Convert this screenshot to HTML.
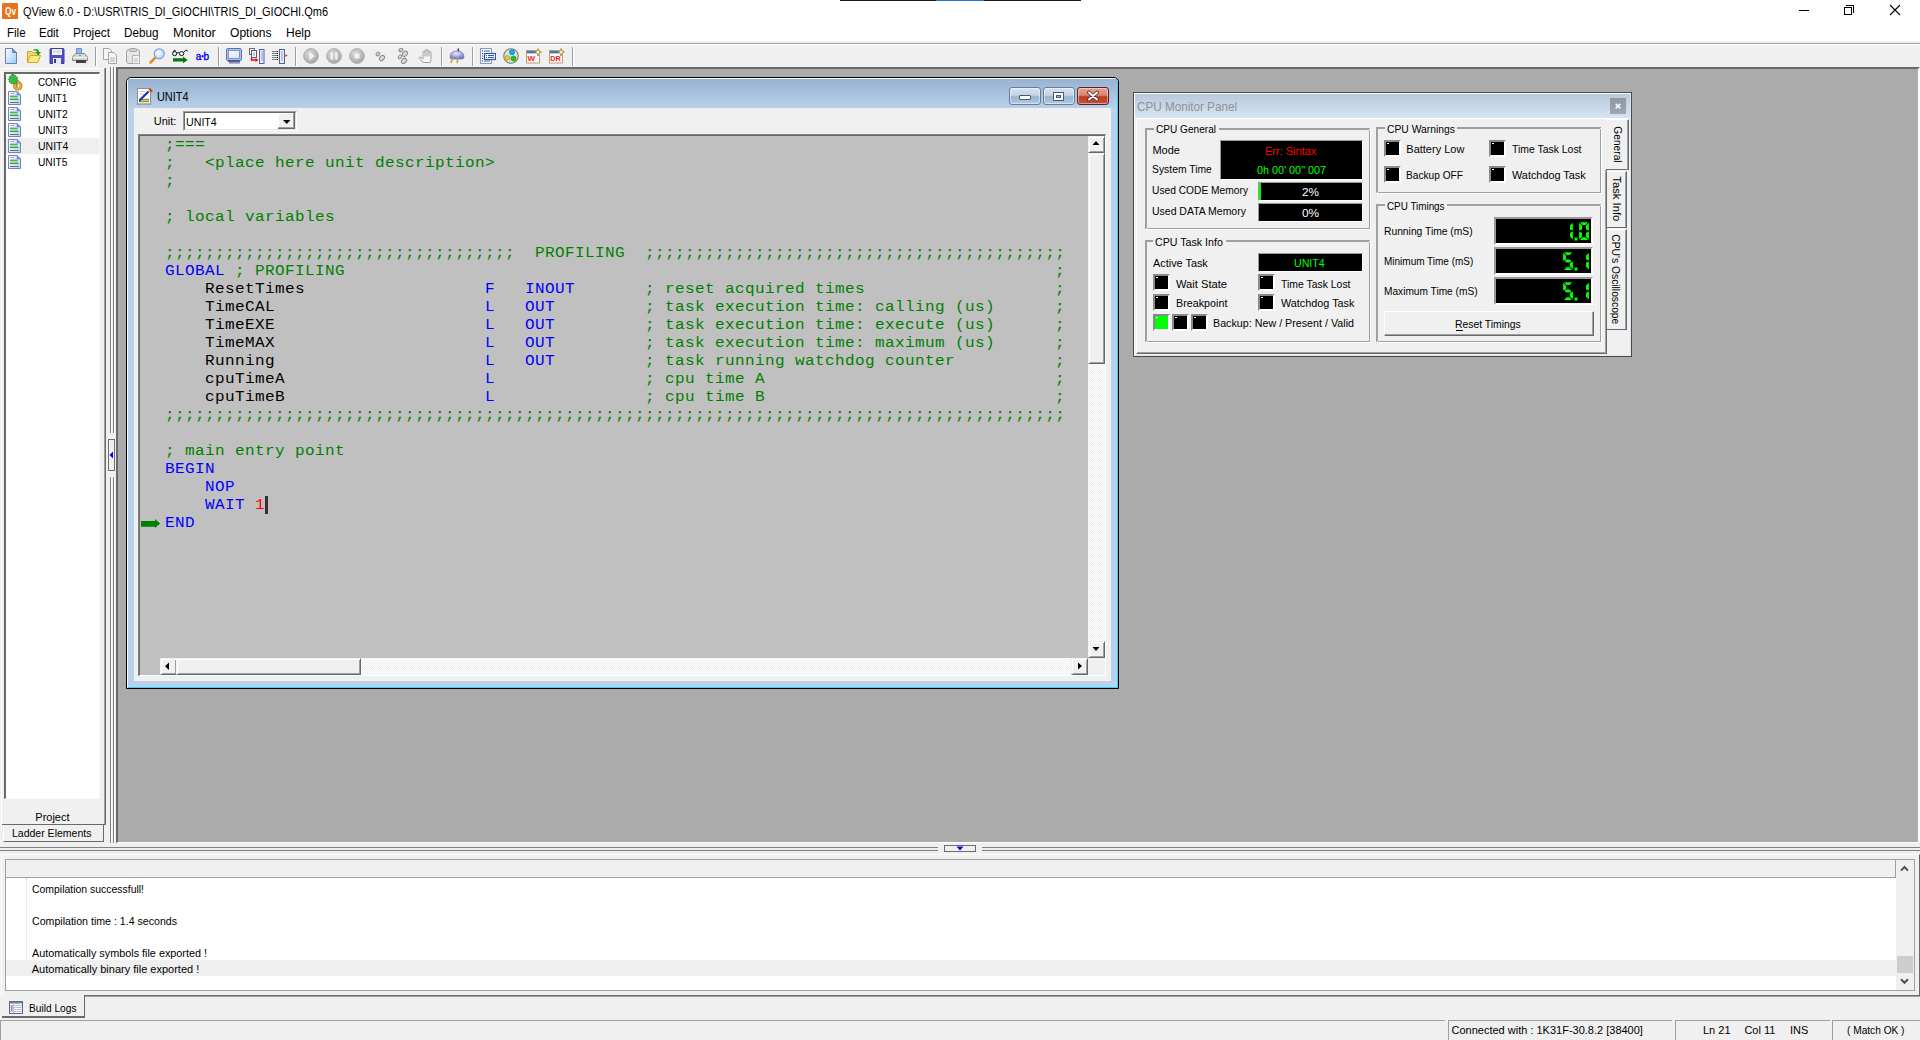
<!DOCTYPE html>
<html><head><meta charset="utf-8"><style>
html,body{margin:0;padding:0;}
body{width:1920px;height:1040px;position:relative;overflow:hidden;background:#f0f0f0;font-family:"Liberation Sans",sans-serif;}
body div{position:absolute;box-sizing:border-box;}
.t{white-space:pre;}
svg{position:absolute;}
</style></head><body>
<div style="left:0px;top:0px;width:1920px;height:41px;background:#fff"></div>
<div style="left:840px;top:0px;width:241px;height:1px;background:#1a1a1a"></div>
<div style="left:936px;top:0px;width:48px;height:1px;background:#2a72e0"></div>
<div style="left:0px;top:41px;width:1920px;height:2px;background:#f0f0f0"></div>
<div style="left:0px;top:43px;width:1920px;height:1px;background:#a0a0a0"></div>
<div style="left:0px;top:44px;width:1920px;height:1px;background:#fff"></div>
<div style="left:2px;top:3px;width:16px;height:16px;background:#e8731c;border-radius:1px"></div>
<div class="t" style="left:4.50px;top:6.54px;font:bold 10px 'Liberation Sans', sans-serif;line-height:10px;color:#fff;transform:scaleX(0.8246);transform-origin:0 0;">Qv</div>
<div class="t" style="left:23.00px;top:5.84px;font:normal 12px 'Liberation Sans', sans-serif;line-height:12px;color:#000;transform:scaleX(0.9154);transform-origin:0 0;">QView 6.0 - D:\USR\TRIS_DI_GIOCHI\TRIS_DI_GIOCHI.Qm6</div>
<div style="left:1799px;top:10px;width:10px;height:1px;background:#000"></div>
<div style="left:1844px;top:7px;width:8px;height:8px;border:1px solid #000"></div>
<div style="left:1846px;top:5px;width:8px;height:8px;border-top:1px solid #000;border-right:1px solid #000"></div>
<svg style="left:1889px;top:4px" width="12" height="12"><path d="M1 1L11 11M11 1L1 11" stroke="#000" stroke-width="1.1"/></svg>
<div class="t" style="left:7.10px;top:27.14px;font:normal 12px 'Liberation Sans', sans-serif;line-height:12px;color:#000;transform:scaleX(0.9619);transform-origin:0 0;">File</div>
<div class="t" style="left:39.00px;top:27.14px;font:normal 12px 'Liberation Sans', sans-serif;line-height:12px;color:#000;transform:scaleX(0.9576);transform-origin:0 0;">Edit</div>
<div class="t" style="left:73.00px;top:27.14px;font:normal 12px 'Liberation Sans', sans-serif;line-height:12px;color:#000;transform:scaleX(0.9907);transform-origin:0 0;">Project</div>
<div class="t" style="left:124.30px;top:27.14px;font:normal 12px 'Liberation Sans', sans-serif;line-height:12px;color:#000;transform:scaleX(0.9756);transform-origin:0 0;">Debug</div>
<div class="t" style="left:173.20px;top:27.14px;font:normal 12px 'Liberation Sans', sans-serif;line-height:12px;color:#000;transform:scaleX(1.0696);transform-origin:0 0;">Monitor</div>
<div class="t" style="left:230.20px;top:27.14px;font:normal 12px 'Liberation Sans', sans-serif;line-height:12px;color:#000;transform:scaleX(1.0059);transform-origin:0 0;">Options</div>
<div class="t" style="left:286.00px;top:27.14px;font:normal 12px 'Liberation Sans', sans-serif;line-height:12px;color:#000;">Help</div>
<div style="left:0px;top:67px;width:106px;height:776px;background:#f0f0f0"></div>
<div style="left:1px;top:68px;width:104px;height:1px;background:#fff"></div>
<div style="left:1px;top:68px;width:1px;height:757px;background:#fff"></div>
<div style="left:104px;top:68px;width:1px;height:757px;background:#a0a0a0"></div>
<div style="left:105px;top:68px;width:1px;height:757px;background:#696969"></div>
<div style="left:4px;top:72px;width:96px;height:727px;background:#fff;border-top:2px solid #696969;border-left:2px solid #696969;border-right:1px solid #f8f8f8;border-bottom:1px solid #f8f8f8"></div>
<div style="left:6px;top:138px;width:93px;height:16px;background:#efefef"></div>
<div class="t" style="left:38.00px;top:76.69px;font:normal 11px 'Liberation Sans', sans-serif;line-height:11px;color:#000;transform:scaleX(0.8954);transform-origin:0 0;">CONFIG</div>
<div class="t" style="left:38.00px;top:92.69px;font:normal 11px 'Liberation Sans', sans-serif;line-height:11px;color:#000;transform:scaleX(0.9219);transform-origin:0 0;">UNIT1</div>
<div class="t" style="left:38.00px;top:108.69px;font:normal 11px 'Liberation Sans', sans-serif;line-height:11px;color:#000;transform:scaleX(0.9377);transform-origin:0 0;">UNIT2</div>
<div class="t" style="left:38.00px;top:124.69px;font:normal 11px 'Liberation Sans', sans-serif;line-height:11px;color:#000;transform:scaleX(0.9282);transform-origin:0 0;">UNIT3</div>
<div class="t" style="left:38.00px;top:140.69px;font:normal 11px 'Liberation Sans', sans-serif;line-height:11px;color:#000;transform:scaleX(0.9534);transform-origin:0 0;">UNIT4</div>
<div class="t" style="left:38.00px;top:156.69px;font:normal 11px 'Liberation Sans', sans-serif;line-height:11px;color:#000;transform:scaleX(0.9282);transform-origin:0 0;">UNIT5</div>
<div style="left:2px;top:824px;width:103px;height:1px;background:#696969"></div>
<div class="t" style="left:35.30px;top:811.99px;font:normal 11px 'Liberation Sans', sans-serif;line-height:11px;color:#000;">Project</div>
<div style="left:3px;top:825px;width:101px;height:17px;background:#f0f0f0;border-right:1px solid #696969;border-bottom:1px solid #696969;border-left:1px solid #fff"></div>
<div class="t" style="left:12.30px;top:827.69px;font:normal 11px 'Liberation Sans', sans-serif;line-height:11px;color:#000;transform:scaleX(0.9548);transform-origin:0 0;">Ladder Elements</div>
<div style="left:110px;top:67px;width:1px;height:366px;background:#808080"></div>
<div style="left:113px;top:67px;width:1px;height:366px;background:#808080"></div>
<div style="left:111px;top:67px;width:1px;height:366px;background:#fff"></div>
<div style="left:114px;top:67px;width:1px;height:366px;background:#fff"></div>
<div style="left:110px;top:477px;width:1px;height:366px;background:#808080"></div>
<div style="left:113px;top:477px;width:1px;height:366px;background:#808080"></div>
<div style="left:111px;top:477px;width:1px;height:366px;background:#fff"></div>
<div style="left:114px;top:477px;width:1px;height:366px;background:#fff"></div>
<div style="left:108px;top:439px;width:7px;height:32px;background:#f0f0f0;border:1px solid #6d6d6d"></div>
<svg style="left:109px;top:451px" width="5" height="8"><path d="M4 0.5V7.5L0.5 4Z" fill="#0000ff"/></svg>
<div style="left:116px;top:67px;width:1804px;height:776px;background:#ababab;border-top:2px solid #696969;border-left:2px solid #696969;border-right:2px solid #fff;border-bottom:1px solid #fff"></div>
<div style="left:0px;top:843px;width:1920px;height:11px;background:#f0f0f0"></div>
<div style="left:0px;top:847px;width:938px;height:1px;background:#808080"></div>
<div style="left:0px;top:850px;width:938px;height:1px;background:#808080"></div>
<div style="left:982px;top:847px;width:938px;height:1px;background:#808080"></div>
<div style="left:982px;top:850px;width:938px;height:1px;background:#808080"></div>
<div style="left:944px;top:845px;width:32px;height:7px;background:#f0f0f0;border:1px solid #6d6d6d"></div>
<svg style="left:956px;top:846px" width="8" height="5"><path d="M0.5 0.5H7.5L4 4.5Z" fill="#0000ff"/></svg>
<div style="left:1px;top:854px;width:1919px;height:142px;background:#f0f0f0;border-top:1px solid #fff;border-left:1px solid #fff;border-right:1px solid #696969"></div>
<div style="left:5px;top:859px;width:1910px;height:132px;background:#fff;border:1px solid #a0a0a0"></div>
<div style="left:6px;top:860px;width:1890px;height:18px;background:#f0f0f0;border-bottom:1px solid #a0a0a0;border-right:1px solid #a0a0a0"></div>
<div style="left:1896px;top:860px;width:18px;height:130px;background:#f0f0f0"></div>
<div style="left:1897px;top:956px;width:16px;height:17px;background:#cdcdcd"></div>
<svg style="left:1900px;top:865px" width="9" height="7"><path d="M1 5.6L4.5 2L8 5.6" stroke="#505050" stroke-width="2" fill="none"/></svg>
<svg style="left:1900px;top:978px" width="9" height="7"><path d="M1 1.2L4.5 4.8L8 1.2" stroke="#505050" stroke-width="2" fill="none"/></svg>
<div style="left:6px;top:960px;width:1890px;height:16px;background:#efefef"></div>
<div style="left:26px;top:878px;width:1px;height:82px;border-left:1px dotted #dcdcdc"></div>
<div class="t" style="left:31.75px;top:883.69px;font:normal 11px 'Liberation Sans', sans-serif;line-height:11px;color:#000;transform:scaleX(0.9492);transform-origin:0 0;">Compilation successfull!</div>
<div class="t" style="left:31.75px;top:915.69px;font:normal 11px 'Liberation Sans', sans-serif;line-height:11px;color:#000;transform:scaleX(0.9641);transform-origin:0 0;">Compilation time : 1.4 seconds</div>
<div class="t" style="left:31.75px;top:947.69px;font:normal 11px 'Liberation Sans', sans-serif;line-height:11px;color:#000;transform:scaleX(0.9837);transform-origin:0 0;">Automatically symbols file exported !</div>
<div class="t" style="left:31.75px;top:963.69px;font:normal 11px 'Liberation Sans', sans-serif;line-height:11px;color:#000;">Automatically binary file exported !</div>
<div style="left:84px;top:995px;width:1836px;height:1px;background:#6d6d6d"></div>
<div style="left:85px;top:996px;width:1835px;height:1px;background:#a0a0a0"></div>
<div style="left:2px;top:996px;width:83px;height:22px;background:#f0f0f0;border-right:1px solid #696969;border-bottom:2px solid #696969"></div>
<div class="t" style="left:29.00px;top:1003.19px;font:normal 11px 'Liberation Sans', sans-serif;line-height:11px;color:#000;transform:scaleX(0.9247);transform-origin:0 0;">Build Logs</div>
<div style="left:0px;top:1019px;width:1920px;height:21px;background:#f0f0f0"></div>
<div style="left:0px;top:1020px;width:1445px;height:20px;border-top:1px solid #a0a0a0;border-left:1px solid #a0a0a0"></div>
<div style="left:1448px;top:1020px;width:224px;height:20px;border-top:1px solid #a0a0a0;border-left:1px solid #a0a0a0"></div>
<div style="left:1675px;top:1020px;width:155px;height:20px;border-top:1px solid #a0a0a0;border-left:1px solid #a0a0a0"></div>
<div style="left:1832px;top:1020px;width:88px;height:20px;border-top:1px solid #a0a0a0;border-left:1px solid #a0a0a0"></div>
<div class="t" style="left:1451.50px;top:1024.69px;font:normal 11px 'Liberation Sans', sans-serif;line-height:11px;color:#000;">Connected with : 1K31F-30.8.2 [38400]</div>
<div class="t" style="left:1703.00px;top:1024.69px;font:normal 11px 'Liberation Sans', sans-serif;line-height:11px;color:#000;">Ln 21</div>
<div class="t" style="left:1744.40px;top:1024.69px;font:normal 11px 'Liberation Sans', sans-serif;line-height:11px;color:#000;">Col 11</div>
<div class="t" style="left:1790.00px;top:1024.69px;font:normal 11px 'Liberation Sans', sans-serif;line-height:11px;color:#000;">INS</div>
<div class="t" style="left:1846.50px;top:1024.69px;font:normal 11px 'Liberation Sans', sans-serif;line-height:11px;color:#000;transform:scaleX(0.9223);transform-origin:0 0;">( Match OK )</div>
<div style="left:126px;top:77px;width:993px;height:612px;border:1px solid #000;border-radius:5px 5px 0 0;background:#b9d1ea;overflow:hidden"><div style="left:0;top:0;width:991px;height:610px;border-top:1px solid #fff;border-left:1px solid #fff;border-right:1px solid #36d0ff;border-bottom:1px solid #36d0ff;border-radius:4px 4px 0 0"></div><div style="left:1px;top:1px;width:989px;height:30px;background:linear-gradient(#98b3d1,#b9d1ea)"></div></div>
<div style="left:134px;top:108px;width:977px;height:573px;background:#f0f0f0"></div>
<svg style="left:137px;top:87px" width="17" height="18" viewBox="0 0 17 18"><rect x="0.5" y="1.5" width="13" height="16" fill="#fff" stroke="#8c8c8c"/><rect x="1" y="16" width="12" height="1.5" fill="#b8b8b8"/><path d="M2.5 4.5H8M2.5 7H7" stroke="#c4c4c4"/><path d="M2.5 12.5H12M2.5 14.5H12" stroke="#9a9420" stroke-width="1.3"/><path d="M3 13L12.5 3.5" stroke="#1428d8" stroke-width="2.2"/><path d="M11.5 4.5L13.5 2.5" stroke="#f0e020" stroke-width="2.4"/><path d="M13 1.2L15.8 4L14.6 5.2L11.8 2.4Z" fill="#ff1818"/><path d="M2.2 14.5L3.5 12.5" stroke="#000" stroke-width="1.2"/></svg>
<div class="t" style="left:156.50px;top:90.64px;font:normal 12px 'Liberation Sans', sans-serif;line-height:12px;color:#000;transform:scaleX(0.9086);transform-origin:0 0;">UNIT4</div>
<div style="left:1009px;top:87px;width:32px;height:18px;border:1px solid #6b7d96;border-radius:3px;background:linear-gradient(#d6e3f2 0%,#c3d4e8 45%,#9ab4d0 55%,#b5cae2 100%);box-shadow:inset 0 0 0 1px rgba(255,255,255,.45)"></div>
<div style="left:1043px;top:87px;width:32px;height:18px;border:1px solid #6b7d96;border-radius:3px;background:linear-gradient(#d6e3f2 0%,#c3d4e8 45%,#9ab4d0 55%,#b5cae2 100%);box-shadow:inset 0 0 0 1px rgba(255,255,255,.45)"></div>
<div style="left:1077px;top:87px;width:32px;height:18px;border:1px solid #5b2222;border-radius:3px;background:linear-gradient(#e8a090 0%,#d88670 45%,#b83c22 55%,#c75038 100%);box-shadow:inset 0 0 0 1px rgba(255,255,255,.45)"></div>
<div style="left:1019px;top:95px;width:12px;height:5px;background:#fff;border:1px solid #4b5a70;border-radius:1px"></div>
<div style="left:1054px;top:93px;width:9px;height:7px;background:transparent;border:2px solid #fff;outline:1px solid #4b5a70;box-shadow:inset 0 0 0 1px #4b5a70"></div>
<svg style="left:1086px;top:90px" width="14" height="12" viewBox="0 0 14 12"><path d="M3 2.5L11 9.5M11 2.5L3 9.5" stroke="#4a2a2a" stroke-width="3.6" stroke-linecap="round"/><path d="M3 2.5L11 9.5M11 2.5L3 9.5" stroke="#fff" stroke-width="2" stroke-linecap="round"/></svg>
<div class="t" style="left:153.80px;top:115.69px;font:normal 11px 'Liberation Sans', sans-serif;line-height:11px;color:#000;">Unit:</div>
<div style="left:183px;top:111px;width:114px;height:20px;background:#fff;border-top:1px solid #a0a0a0;border-left:1px solid #a0a0a0;border-right:1px solid #fff;border-bottom:1px solid #fff"></div>
<div style="left:184px;top:112px;width:112px;height:18px;border-top:1px solid #696969;border-left:1px solid #696969;border-right:1px solid #e3e3e3;border-bottom:1px solid #e3e3e3"></div>
<div style="left:278px;top:113px;width:17px;height:16px;background:#f0f0f0;border-right:1px solid #696969;border-bottom:1px solid #696969;box-shadow:inset -1px -1px 0 #a0a0a0, inset 1px 1px 0 #fff"></div>
<svg style="left:283px;top:120px" width="8" height="5"><path d="M0 0H7.5L3.75 4Z" fill="#000"/></svg>
<div class="t" style="left:186.40px;top:117.09px;font:normal 11px 'Liberation Sans', sans-serif;line-height:11px;color:#000;transform:scaleX(0.9691);transform-origin:0 0;">UNIT4</div>
<div style="left:138px;top:134px;width:968px;height:542px;background:#c0c0c0;border-top:2px solid #808080;border-left:2px solid #808080;border-right:1px solid #fff;border-bottom:1px solid #fff"></div>
<div style="left:139px;top:135px;width:966px;height:1px;background:#696969"></div>
<div style="left:139px;top:135px;width:1px;height:540px;background:#696969"></div>
<div style="left:1088px;top:136px;width:17px;height:522px;background-color:#fcfcfc;background-image:repeating-conic-gradient(#f0f0f0 0 25%, #ffffff 0 50%);background-size:2px 2px"></div>
<div style="left:1088px;top:136px;width:17px;height:17px;background:#f0f0f0;border-top:1px solid #f0f0f0;border-left:1px solid #f0f0f0;border-right:1px solid #696969;border-bottom:1px solid #696969;box-shadow:inset 1px 1px 0 #fff, inset -1px -1px 0 #a0a0a0"></div>
<svg style="left:1092px;top:140px" width="9" height="6"><path d="M0.5 5H7.5L4 1Z" fill="#000"/></svg>
<div style="left:1088px;top:153px;width:17px;height:211px;background:#f0f0f0;border-top:1px solid #f0f0f0;border-left:1px solid #f0f0f0;border-right:1px solid #696969;border-bottom:1px solid #696969;box-shadow:inset 1px 1px 0 #fff, inset -1px -1px 0 #a0a0a0"></div>
<div style="left:1088px;top:641px;width:17px;height:17px;background:#f0f0f0;border-top:1px solid #f0f0f0;border-left:1px solid #f0f0f0;border-right:1px solid #696969;border-bottom:1px solid #696969;box-shadow:inset 1px 1px 0 #fff, inset -1px -1px 0 #a0a0a0"></div>
<svg style="left:1092px;top:646px" width="9" height="6"><path d="M0.5 1H7.5L4 5Z" fill="#000"/></svg>
<div style="left:160px;top:658px;width:928px;height:17px;background-color:#fcfcfc;background-image:repeating-conic-gradient(#f0f0f0 0 25%, #ffffff 0 50%);background-size:2px 2px"></div>
<div style="left:160px;top:658px;width:17px;height:17px;background:#f0f0f0;border-top:1px solid #f0f0f0;border-left:1px solid #f0f0f0;border-right:1px solid #696969;border-bottom:1px solid #696969;box-shadow:inset 1px 1px 0 #fff, inset -1px -1px 0 #a0a0a0"></div>
<svg style="left:164px;top:662px" width="6" height="9"><path d="M5 0.5V8L1 4.25Z" fill="#000"/></svg>
<div style="left:176px;top:658px;width:185px;height:17px;background:#f0f0f0;border-top:1px solid #f0f0f0;border-left:1px solid #f0f0f0;border-right:1px solid #696969;border-bottom:1px solid #696969;box-shadow:inset 1px 1px 0 #fff, inset -1px -1px 0 #a0a0a0"></div>
<div style="left:1071px;top:658px;width:17px;height:17px;background:#f0f0f0;border-top:1px solid #f0f0f0;border-left:1px solid #f0f0f0;border-right:1px solid #696969;border-bottom:1px solid #696969;box-shadow:inset 1px 1px 0 #fff, inset -1px -1px 0 #a0a0a0"></div>
<svg style="left:1077px;top:662px" width="6" height="9"><path d="M1 0.5V7.5L5 4Z" fill="#000"/></svg>
<div style="left:1088px;top:658px;width:17px;height:17px;background:#f0f0f0"></div>
<div style="left:140px;top:136px;width:948px;height:522px;overflow:hidden">
<div class="t" style="left:25px;top:-0.26px;font:16px 'Liberation Mono', monospace;letter-spacing:0.4px;line-height:18px;color:#008000;transform-origin:0 13.26px;transform:scaleY(0.86)">;===</div>
<div class="t" style="left:25px;top:17.74px;font:16px 'Liberation Mono', monospace;letter-spacing:0.4px;line-height:18px;color:#008000;transform-origin:0 13.26px;transform:scaleY(0.86)">;   &lt;place here unit description&gt;</div>
<div class="t" style="left:25px;top:35.74px;font:16px 'Liberation Mono', monospace;letter-spacing:0.4px;line-height:18px;color:#008000;transform-origin:0 13.26px;transform:scaleY(0.86)">;</div>
<div class="t" style="left:25px;top:71.74px;font:16px 'Liberation Mono', monospace;letter-spacing:0.4px;line-height:18px;color:#008000;transform-origin:0 13.26px;transform:scaleY(0.86)">; local variables</div>
<div class="t" style="left:25px;top:107.74px;font:16px 'Liberation Mono', monospace;letter-spacing:0.4px;line-height:18px;color:#008000;transform-origin:0 13.26px;transform:scaleY(0.86)">;;;;;;;;;;;;;;;;;;;;;;;;;;;;;;;;;;;  PROFILING  ;;;;;;;;;;;;;;;;;;;;;;;;;;;;;;;;;;;;;;;;;;</div>
<div class="t" style="left:25px;top:125.74px;font:16px 'Liberation Mono', monospace;letter-spacing:0.4px;line-height:18px;color:#0000ff;transform-origin:0 13.26px;transform:scaleY(0.86)">GLOBAL</div>
<div class="t" style="left:95px;top:125.74px;font:16px 'Liberation Mono', monospace;letter-spacing:0.4px;line-height:18px;color:#008000;transform-origin:0 13.26px;transform:scaleY(0.86)">; PROFILING</div>
<div class="t" style="left:915px;top:125.74px;font:16px 'Liberation Mono', monospace;letter-spacing:0.4px;line-height:18px;color:#008000;transform-origin:0 13.26px;transform:scaleY(0.86)">;</div>
<div class="t" style="left:65px;top:143.74px;font:16px 'Liberation Mono', monospace;letter-spacing:0.4px;line-height:18px;color:#000000;transform-origin:0 13.26px;transform:scaleY(0.86)">ResetTimes</div>
<div class="t" style="left:345px;top:143.74px;font:16px 'Liberation Mono', monospace;letter-spacing:0.4px;line-height:18px;color:#0000ff;transform-origin:0 13.26px;transform:scaleY(0.86)">F</div>
<div class="t" style="left:385px;top:143.74px;font:16px 'Liberation Mono', monospace;letter-spacing:0.4px;line-height:18px;color:#0000ff;transform-origin:0 13.26px;transform:scaleY(0.86)">INOUT</div>
<div class="t" style="left:505px;top:143.74px;font:16px 'Liberation Mono', monospace;letter-spacing:0.4px;line-height:18px;color:#008000;transform-origin:0 13.26px;transform:scaleY(0.86)">; reset acquired times</div>
<div class="t" style="left:915px;top:143.74px;font:16px 'Liberation Mono', monospace;letter-spacing:0.4px;line-height:18px;color:#008000;transform-origin:0 13.26px;transform:scaleY(0.86)">;</div>
<div class="t" style="left:65px;top:161.74px;font:16px 'Liberation Mono', monospace;letter-spacing:0.4px;line-height:18px;color:#000000;transform-origin:0 13.26px;transform:scaleY(0.86)">TimeCAL</div>
<div class="t" style="left:345px;top:161.74px;font:16px 'Liberation Mono', monospace;letter-spacing:0.4px;line-height:18px;color:#0000ff;transform-origin:0 13.26px;transform:scaleY(0.86)">L</div>
<div class="t" style="left:385px;top:161.74px;font:16px 'Liberation Mono', monospace;letter-spacing:0.4px;line-height:18px;color:#0000ff;transform-origin:0 13.26px;transform:scaleY(0.86)">OUT</div>
<div class="t" style="left:505px;top:161.74px;font:16px 'Liberation Mono', monospace;letter-spacing:0.4px;line-height:18px;color:#008000;transform-origin:0 13.26px;transform:scaleY(0.86)">; task execution time: calling (us)</div>
<div class="t" style="left:915px;top:161.74px;font:16px 'Liberation Mono', monospace;letter-spacing:0.4px;line-height:18px;color:#008000;transform-origin:0 13.26px;transform:scaleY(0.86)">;</div>
<div class="t" style="left:65px;top:179.74px;font:16px 'Liberation Mono', monospace;letter-spacing:0.4px;line-height:18px;color:#000000;transform-origin:0 13.26px;transform:scaleY(0.86)">TimeEXE</div>
<div class="t" style="left:345px;top:179.74px;font:16px 'Liberation Mono', monospace;letter-spacing:0.4px;line-height:18px;color:#0000ff;transform-origin:0 13.26px;transform:scaleY(0.86)">L</div>
<div class="t" style="left:385px;top:179.74px;font:16px 'Liberation Mono', monospace;letter-spacing:0.4px;line-height:18px;color:#0000ff;transform-origin:0 13.26px;transform:scaleY(0.86)">OUT</div>
<div class="t" style="left:505px;top:179.74px;font:16px 'Liberation Mono', monospace;letter-spacing:0.4px;line-height:18px;color:#008000;transform-origin:0 13.26px;transform:scaleY(0.86)">; task execution time: execute (us)</div>
<div class="t" style="left:915px;top:179.74px;font:16px 'Liberation Mono', monospace;letter-spacing:0.4px;line-height:18px;color:#008000;transform-origin:0 13.26px;transform:scaleY(0.86)">;</div>
<div class="t" style="left:65px;top:197.74px;font:16px 'Liberation Mono', monospace;letter-spacing:0.4px;line-height:18px;color:#000000;transform-origin:0 13.26px;transform:scaleY(0.86)">TimeMAX</div>
<div class="t" style="left:345px;top:197.74px;font:16px 'Liberation Mono', monospace;letter-spacing:0.4px;line-height:18px;color:#0000ff;transform-origin:0 13.26px;transform:scaleY(0.86)">L</div>
<div class="t" style="left:385px;top:197.74px;font:16px 'Liberation Mono', monospace;letter-spacing:0.4px;line-height:18px;color:#0000ff;transform-origin:0 13.26px;transform:scaleY(0.86)">OUT</div>
<div class="t" style="left:505px;top:197.74px;font:16px 'Liberation Mono', monospace;letter-spacing:0.4px;line-height:18px;color:#008000;transform-origin:0 13.26px;transform:scaleY(0.86)">; task execution time: maximum (us)</div>
<div class="t" style="left:915px;top:197.74px;font:16px 'Liberation Mono', monospace;letter-spacing:0.4px;line-height:18px;color:#008000;transform-origin:0 13.26px;transform:scaleY(0.86)">;</div>
<div class="t" style="left:65px;top:215.74px;font:16px 'Liberation Mono', monospace;letter-spacing:0.4px;line-height:18px;color:#000000;transform-origin:0 13.26px;transform:scaleY(0.86)">Running</div>
<div class="t" style="left:345px;top:215.74px;font:16px 'Liberation Mono', monospace;letter-spacing:0.4px;line-height:18px;color:#0000ff;transform-origin:0 13.26px;transform:scaleY(0.86)">L</div>
<div class="t" style="left:385px;top:215.74px;font:16px 'Liberation Mono', monospace;letter-spacing:0.4px;line-height:18px;color:#0000ff;transform-origin:0 13.26px;transform:scaleY(0.86)">OUT</div>
<div class="t" style="left:505px;top:215.74px;font:16px 'Liberation Mono', monospace;letter-spacing:0.4px;line-height:18px;color:#008000;transform-origin:0 13.26px;transform:scaleY(0.86)">; task running watchdog counter</div>
<div class="t" style="left:915px;top:215.74px;font:16px 'Liberation Mono', monospace;letter-spacing:0.4px;line-height:18px;color:#008000;transform-origin:0 13.26px;transform:scaleY(0.86)">;</div>
<div class="t" style="left:65px;top:233.74px;font:16px 'Liberation Mono', monospace;letter-spacing:0.4px;line-height:18px;color:#000000;transform-origin:0 13.26px;transform:scaleY(0.86)">cpuTimeA</div>
<div class="t" style="left:345px;top:233.74px;font:16px 'Liberation Mono', monospace;letter-spacing:0.4px;line-height:18px;color:#0000ff;transform-origin:0 13.26px;transform:scaleY(0.86)">L</div>
<div class="t" style="left:505px;top:233.74px;font:16px 'Liberation Mono', monospace;letter-spacing:0.4px;line-height:18px;color:#008000;transform-origin:0 13.26px;transform:scaleY(0.86)">; cpu time A</div>
<div class="t" style="left:915px;top:233.74px;font:16px 'Liberation Mono', monospace;letter-spacing:0.4px;line-height:18px;color:#008000;transform-origin:0 13.26px;transform:scaleY(0.86)">;</div>
<div class="t" style="left:65px;top:251.74px;font:16px 'Liberation Mono', monospace;letter-spacing:0.4px;line-height:18px;color:#000000;transform-origin:0 13.26px;transform:scaleY(0.86)">cpuTimeB</div>
<div class="t" style="left:345px;top:251.74px;font:16px 'Liberation Mono', monospace;letter-spacing:0.4px;line-height:18px;color:#0000ff;transform-origin:0 13.26px;transform:scaleY(0.86)">L</div>
<div class="t" style="left:505px;top:251.74px;font:16px 'Liberation Mono', monospace;letter-spacing:0.4px;line-height:18px;color:#008000;transform-origin:0 13.26px;transform:scaleY(0.86)">; cpu time B</div>
<div class="t" style="left:915px;top:251.74px;font:16px 'Liberation Mono', monospace;letter-spacing:0.4px;line-height:18px;color:#008000;transform-origin:0 13.26px;transform:scaleY(0.86)">;</div>
<div class="t" style="left:25px;top:269.74px;font:16px 'Liberation Mono', monospace;letter-spacing:0.4px;line-height:18px;color:#008000;transform-origin:0 13.26px;transform:scaleY(0.86)">;;;;;;;;;;;;;;;;;;;;;;;;;;;;;;;;;;;;;;;;;;;;;;;;;;;;;;;;;;;;;;;;;;;;;;;;;;;;;;;;;;;;;;;;;;</div>
<div class="t" style="left:25px;top:305.74px;font:16px 'Liberation Mono', monospace;letter-spacing:0.4px;line-height:18px;color:#008000;transform-origin:0 13.26px;transform:scaleY(0.86)">; main entry point</div>
<div class="t" style="left:25px;top:323.74px;font:16px 'Liberation Mono', monospace;letter-spacing:0.4px;line-height:18px;color:#0000ff;transform-origin:0 13.26px;transform:scaleY(0.86)">BEGIN</div>
<div class="t" style="left:65px;top:341.74px;font:16px 'Liberation Mono', monospace;letter-spacing:0.4px;line-height:18px;color:#0000ff;transform-origin:0 13.26px;transform:scaleY(0.86)">NOP</div>
<div class="t" style="left:65px;top:359.74px;font:16px 'Liberation Mono', monospace;letter-spacing:0.4px;line-height:18px;color:#0000ff;transform-origin:0 13.26px;transform:scaleY(0.86)">WAIT</div>
<div class="t" style="left:115px;top:359.74px;font:16px 'Liberation Mono', monospace;letter-spacing:0.4px;line-height:18px;color:#ff0000;transform-origin:0 13.26px;transform:scaleY(0.86)">1</div>
<div class="t" style="left:25px;top:377.74px;font:16px 'Liberation Mono', monospace;letter-spacing:0.4px;line-height:18px;color:#0000ff;transform-origin:0 13.26px;transform:scaleY(0.86)">END</div>
</div>
<div style="left:265px;top:496px;width:3px;height:18px;background:#333"></div>
<svg style="left:141px;top:518px" width="20" height="11" viewBox="0 0 20 11"><path d="M0 3H14V1L19.2 5.5L14 10V8.8H0Z" fill="#008000"/></svg>
<div style="left:1133px;top:92px;width:499px;height:265px;background:#f0f0f0;border:1px solid #4a4a4a"></div>
<div style="left:1134px;top:93px;width:497px;height:263px;border-top:1px solid #fff;border-left:1px solid #fff;border-right:1px solid #dce6f4;border-bottom:1px solid #dce6f4"></div>
<div style="left:1135px;top:94px;width:495px;height:24px;background:linear-gradient(#b9cadc,#d7e4f1)"></div>
<div style="left:1135px;top:118px;width:494px;height:1px;background:#fff"></div>
<div class="t" style="left:1136.50px;top:99.80px;font:normal 13px 'Liberation Sans', sans-serif;line-height:13px;color:#8c9299;transform:scaleX(0.8987);transform-origin:0 0;">CPU Monitor Panel</div>
<div style="left:1610px;top:98px;width:16px;height:16px;background:linear-gradient(#8e99a4,#9da7b1)"></div>
<svg style="left:1614px;top:102px" width="8" height="8"><path d="M1.6 1.8L6.4 6.4M6.4 1.8L1.6 6.4" stroke="#fff" stroke-width="1.5"/></svg>
<div style="left:1136px;top:119px;width:471px;height:235px;border-left:1px solid #fff;border-right:1px solid #696969;border-bottom:1px solid #696969"></div>
<div style="left:1605px;top:170px;width:1px;height:183px;background:#a0a0a0"></div>
<div style="left:1137px;top:352px;width:468px;height:1px;background:#a0a0a0"></div>
<div style="left:1145px;top:128px;width:225px;height:101px;border:1px solid #a0a0a0"></div>
<div style="left:1146px;top:129px;width:225px;height:101px;border:1px solid #fff"></div>
<div style="left:1146px;top:129px;width:223px;height:99px;border:1px solid #a0a0a0;border-right:none;border-bottom:none"></div>
<div style="left:1153.6px;top:122px;width:65px;height:12px;background:#f0f0f0"></div>
<div class="t" style="left:1155.60px;top:123.69px;font:normal 11px 'Liberation Sans', sans-serif;line-height:11px;color:#000;transform:scaleX(0.9172);transform-origin:0 0;">CPU General</div>
<div style="left:1145px;top:240px;width:225px;height:102px;border:1px solid #a0a0a0"></div>
<div style="left:1146px;top:241px;width:225px;height:102px;border:1px solid #fff"></div>
<div style="left:1146px;top:241px;width:223px;height:100px;border:1px solid #a0a0a0;border-right:none;border-bottom:none"></div>
<div style="left:1153.4px;top:234px;width:73px;height:12px;background:#f0f0f0"></div>
<div class="t" style="left:1155.40px;top:237.29px;font:normal 11px 'Liberation Sans', sans-serif;line-height:11px;color:#000;transform:scaleX(0.9673);transform-origin:0 0;">CPU Task Info</div>
<div style="left:1376px;top:127px;width:225px;height:66px;border:1px solid #a0a0a0"></div>
<div style="left:1377px;top:128px;width:225px;height:66px;border:1px solid #fff"></div>
<div style="left:1377px;top:128px;width:223px;height:64px;border:1px solid #a0a0a0;border-right:none;border-bottom:none"></div>
<div style="left:1384.6px;top:121px;width:72.8px;height:12px;background:#f0f0f0"></div>
<div class="t" style="left:1386.60px;top:123.69px;font:normal 11px 'Liberation Sans', sans-serif;line-height:11px;color:#000;transform:scaleX(0.9373);transform-origin:0 0;">CPU Warnings</div>
<div style="left:1376px;top:204px;width:225px;height:138px;border:1px solid #a0a0a0"></div>
<div style="left:1377px;top:205px;width:225px;height:138px;border:1px solid #fff"></div>
<div style="left:1377px;top:205px;width:223px;height:136px;border:1px solid #a0a0a0;border-right:none;border-bottom:none"></div>
<div style="left:1384.6px;top:198px;width:62.7px;height:12px;background:#f0f0f0"></div>
<div class="t" style="left:1386.60px;top:201.19px;font:normal 11px 'Liberation Sans', sans-serif;line-height:11px;color:#000;transform:scaleX(0.8963);transform-origin:0 0;">CPU Timings</div>
<div class="t" style="left:1152.40px;top:144.99px;font:normal 11px 'Liberation Sans', sans-serif;line-height:11px;color:#000;">Mode</div>
<div class="t" style="left:1152.40px;top:163.69px;font:normal 11px 'Liberation Sans', sans-serif;line-height:11px;color:#000;transform:scaleX(0.9409);transform-origin:0 0;">System Time</div>
<div class="t" style="left:1152.40px;top:184.69px;font:normal 11px 'Liberation Sans', sans-serif;line-height:11px;color:#000;transform:scaleX(0.9294);transform-origin:0 0;">Used CODE Memory</div>
<div class="t" style="left:1152.40px;top:205.69px;font:normal 11px 'Liberation Sans', sans-serif;line-height:11px;color:#000;transform:scaleX(0.9524);transform-origin:0 0;">Used DATA Memory</div>
<div style="left:1220px;top:140px;width:143px;height:40px;background:#000;border-top:1px solid #999;border-left:1px solid #999;border-right:1px solid #fff;border-bottom:1px solid #fff"></div>
<div class="t" style="left:1265.00px;top:145.69px;font:normal 11px 'Liberation Sans', sans-serif;line-height:11px;color:#ff0000;">Err: Sintax</div>
<div class="t" style="left:1256.70px;top:165.29px;font:normal 11px 'Liberation Sans', sans-serif;line-height:11px;color:#00ff00;transform:scaleX(0.9825);transform-origin:0 0;">0h 00&#x27; 00&quot; 007</div>
<div style="left:1258px;top:182px;width:105px;height:19px;background:#000;border-top:1px solid #999;border-left:1px solid #999;border-right:1px solid #fff;border-bottom:1px solid #fff"></div>
<div style="left:1259px;top:183px;width:2px;height:17px;background:#00ff00"></div>
<div class="t" style="left:1301.70px;top:186.69px;font:normal 11px 'Liberation Sans', sans-serif;line-height:11px;color:#fff;transform:scaleX(1.0693);transform-origin:0 0;">2%</div>
<div style="left:1258px;top:203px;width:105px;height:19px;background:#000;border-top:1px solid #999;border-left:1px solid #999;border-right:1px solid #fff;border-bottom:1px solid #fff"></div>
<div class="t" style="left:1301.50px;top:208.19px;font:normal 11px 'Liberation Sans', sans-serif;line-height:11px;color:#fff;transform:scaleX(1.0819);transform-origin:0 0;">0%</div>
<div class="t" style="left:1152.80px;top:258.19px;font:normal 11px 'Liberation Sans', sans-serif;line-height:11px;color:#000;transform:scaleX(0.9887);transform-origin:0 0;">Active Task</div>
<div style="left:1258px;top:253px;width:105px;height:19px;background:#000;border-top:1px solid #999;border-left:1px solid #999;border-right:1px solid #fff;border-bottom:1px solid #fff"></div>
<div class="t" style="left:1294.30px;top:258.19px;font:normal 11px 'Liberation Sans', sans-serif;line-height:11px;color:#00ff00;transform:scaleX(0.9660);transform-origin:0 0;">UNIT4</div>
<div style="left:1153px;top:274px;width:17px;height:17px;background:#000;border-top:2px solid #8a8a8a;border-left:2px solid #8a8a8a;border-right:2px solid #fff;border-bottom:2px solid #fff"></div>
<div style="left:1156px;top:277px;width:2px;height:1px;background:#fff"></div>
<div class="t" style="left:1175.60px;top:278.99px;font:normal 11px 'Liberation Sans', sans-serif;line-height:11px;color:#000;transform:scaleX(1.0133);transform-origin:0 0;">Wait State</div>
<div style="left:1258px;top:274px;width:17px;height:17px;background:#000;border-top:2px solid #8a8a8a;border-left:2px solid #8a8a8a;border-right:2px solid #fff;border-bottom:2px solid #fff"></div>
<div style="left:1261px;top:277px;width:2px;height:1px;background:#fff"></div>
<div class="t" style="left:1281.00px;top:278.99px;font:normal 11px 'Liberation Sans', sans-serif;line-height:11px;color:#000;transform:scaleX(0.9476);transform-origin:0 0;">Time Task Lost</div>
<div style="left:1153px;top:294px;width:17px;height:17px;background:#000;border-top:2px solid #8a8a8a;border-left:2px solid #8a8a8a;border-right:2px solid #fff;border-bottom:2px solid #fff"></div>
<div style="left:1156px;top:297px;width:2px;height:1px;background:#fff"></div>
<div class="t" style="left:1175.60px;top:298.49px;font:normal 11px 'Liberation Sans', sans-serif;line-height:11px;color:#000;transform:scaleX(0.9774);transform-origin:0 0;">Breakpoint</div>
<div style="left:1258px;top:294px;width:17px;height:17px;background:#000;border-top:2px solid #8a8a8a;border-left:2px solid #8a8a8a;border-right:2px solid #fff;border-bottom:2px solid #fff"></div>
<div style="left:1261px;top:297px;width:2px;height:1px;background:#fff"></div>
<div class="t" style="left:1281.00px;top:298.49px;font:normal 11px 'Liberation Sans', sans-serif;line-height:11px;color:#000;transform:scaleX(0.9841);transform-origin:0 0;">Watchdog Task</div>
<div style="left:1153px;top:314px;width:17px;height:17px;background:#00ff00;border-top:2px solid #8a8a8a;border-left:2px solid #8a8a8a;border-right:2px solid #fff;border-bottom:2px solid #fff"></div>
<div style="left:1156px;top:317px;width:2px;height:1px;background:#fff"></div>
<div style="left:1172px;top:314px;width:17px;height:17px;background:#000;border-top:2px solid #8a8a8a;border-left:2px solid #8a8a8a;border-right:2px solid #fff;border-bottom:2px solid #fff"></div>
<div style="left:1175px;top:317px;width:2px;height:1px;background:#fff"></div>
<div style="left:1191px;top:314px;width:17px;height:17px;background:#000;border-top:2px solid #8a8a8a;border-left:2px solid #8a8a8a;border-right:2px solid #fff;border-bottom:2px solid #fff"></div>
<div style="left:1194px;top:317px;width:2px;height:1px;background:#fff"></div>
<div class="t" style="left:1213.30px;top:318.09px;font:normal 11px 'Liberation Sans', sans-serif;line-height:11px;color:#000;transform:scaleX(0.9744);transform-origin:0 0;">Backup: New / Present / Valid</div>
<div style="left:1384px;top:140px;width:17px;height:17px;background:#000;border-top:2px solid #8a8a8a;border-left:2px solid #8a8a8a;border-right:2px solid #fff;border-bottom:2px solid #fff"></div>
<div style="left:1387px;top:143px;width:2px;height:1px;background:#fff"></div>
<div class="t" style="left:1406.30px;top:143.69px;font:normal 11px 'Liberation Sans', sans-serif;line-height:11px;color:#000;">Battery Low</div>
<div style="left:1489px;top:140px;width:17px;height:17px;background:#000;border-top:2px solid #8a8a8a;border-left:2px solid #8a8a8a;border-right:2px solid #fff;border-bottom:2px solid #fff"></div>
<div style="left:1492px;top:143px;width:2px;height:1px;background:#fff"></div>
<div class="t" style="left:1512.00px;top:143.69px;font:normal 11px 'Liberation Sans', sans-serif;line-height:11px;color:#000;transform:scaleX(0.9476);transform-origin:0 0;">Time Task Lost</div>
<div style="left:1384px;top:166px;width:17px;height:17px;background:#000;border-top:2px solid #8a8a8a;border-left:2px solid #8a8a8a;border-right:2px solid #fff;border-bottom:2px solid #fff"></div>
<div style="left:1387px;top:169px;width:2px;height:1px;background:#fff"></div>
<div class="t" style="left:1406.30px;top:170.29px;font:normal 11px 'Liberation Sans', sans-serif;line-height:11px;color:#000;transform:scaleX(0.9232);transform-origin:0 0;">Backup OFF</div>
<div style="left:1489px;top:166px;width:17px;height:17px;background:#000;border-top:2px solid #8a8a8a;border-left:2px solid #8a8a8a;border-right:2px solid #fff;border-bottom:2px solid #fff"></div>
<div style="left:1492px;top:169px;width:2px;height:1px;background:#fff"></div>
<div class="t" style="left:1512.00px;top:170.29px;font:normal 11px 'Liberation Sans', sans-serif;line-height:11px;color:#000;transform:scaleX(0.9881);transform-origin:0 0;">Watchdog Task</div>
<div class="t" style="left:1383.50px;top:226.09px;font:normal 11px 'Liberation Sans', sans-serif;line-height:11px;color:#000;transform:scaleX(0.9352);transform-origin:0 0;">Running Time (mS)</div>
<div class="t" style="left:1383.50px;top:256.09px;font:normal 11px 'Liberation Sans', sans-serif;line-height:11px;color:#000;transform:scaleX(0.9078);transform-origin:0 0;">Minimum Time (mS)</div>
<div class="t" style="left:1383.50px;top:286.09px;font:normal 11px 'Liberation Sans', sans-serif;line-height:11px;color:#000;transform:scaleX(0.9219);transform-origin:0 0;">Maximum Time (mS)</div>
<div style="left:1494px;top:217px;width:99px;height:28px;background:#000;border-top:2px solid #999;border-left:2px solid #999;border-right:2px solid #fff;border-bottom:2px solid #fff"></div>
<div style="left:1494px;top:247px;width:99px;height:28px;background:#000;border-top:2px solid #999;border-left:2px solid #999;border-right:2px solid #fff;border-bottom:2px solid #fff"></div>
<div style="left:1494px;top:277px;width:99px;height:28px;background:#000;border-top:2px solid #999;border-left:2px solid #999;border-right:2px solid #fff;border-bottom:2px solid #fff"></div>
<svg style="left:1563px;top:222px" width="27" height="19" viewBox="0 0 27 19" fill="#00ff00"><path transform="translate(0,0)" d="M9.9,0.8 L9.9,8.6 L7,7.4 L7,3.4 Z"/><path transform="translate(0,0)" d="M9.9,9.6 L9.9,17.4 L7,14.8 L7,10.8 Z"/><path transform="translate(16,0)" d="M1,0.3 L9,0.3 L6.6,3 L3.4,3 Z"/><path transform="translate(16,0)" d="M9.9,0.8 L9.9,8.6 L7,7.4 L7,3.4 Z"/><path transform="translate(16,0)" d="M9.9,9.6 L9.9,17.4 L7,14.8 L7,10.8 Z"/><path transform="translate(16,0)" d="M1,17.9 L3.4,15.2 L6.6,15.2 L9,17.9 Z"/><path transform="translate(16,0)" d="M0.1,9.6 L3,10.8 L3,14.8 L0.1,17.4 Z"/><path transform="translate(16,0)" d="M0.1,0.8 L3,3.4 L3,7.4 L0.1,8.6 Z"/><rect x="11.5" y="15.5" width="3" height="3"/></svg>
<svg style="left:1563px;top:252px" width="27" height="19" viewBox="0 0 27 19" fill="#00ff00"><path transform="translate(0,0)" d="M1,0.3 L9,0.3 L6.6,3 L3.4,3 Z"/><path transform="translate(0,0)" d="M0.1,0.8 L3,3.4 L3,7.4 L0.1,8.6 Z"/><path transform="translate(0,0)" d="M1.5,9.1 L3.4,7.6 L6.6,7.6 L8.5,9.1 L6.6,10.6 L3.4,10.6 Z"/><path transform="translate(0,0)" d="M9.9,9.6 L9.9,17.4 L7,14.8 L7,10.8 Z"/><path transform="translate(0,0)" d="M1,17.9 L3.4,15.2 L6.6,15.2 L9,17.9 Z"/><path transform="translate(16,0)" d="M9.9,0.8 L9.9,8.6 L7,7.4 L7,3.4 Z"/><path transform="translate(16,0)" d="M9.9,9.6 L9.9,17.4 L7,14.8 L7,10.8 Z"/><rect x="11.5" y="15.5" width="3" height="3"/></svg>
<svg style="left:1563px;top:282px" width="27" height="19" viewBox="0 0 27 19" fill="#00ff00"><path transform="translate(0,0)" d="M1,0.3 L9,0.3 L6.6,3 L3.4,3 Z"/><path transform="translate(0,0)" d="M0.1,0.8 L3,3.4 L3,7.4 L0.1,8.6 Z"/><path transform="translate(0,0)" d="M1.5,9.1 L3.4,7.6 L6.6,7.6 L8.5,9.1 L6.6,10.6 L3.4,10.6 Z"/><path transform="translate(0,0)" d="M9.9,9.6 L9.9,17.4 L7,14.8 L7,10.8 Z"/><path transform="translate(0,0)" d="M1,17.9 L3.4,15.2 L6.6,15.2 L9,17.9 Z"/><path transform="translate(16,0)" d="M9.9,0.8 L9.9,8.6 L7,7.4 L7,3.4 Z"/><path transform="translate(16,0)" d="M9.9,9.6 L9.9,17.4 L7,14.8 L7,10.8 Z"/><rect x="11.5" y="15.5" width="3" height="3"/></svg>
<div style="left:1384px;top:311px;width:210px;height:25px;background:#f0f0f0;border-top:1px solid #fff;border-left:1px solid #fff;border-right:1px solid #696969;border-bottom:1px solid #696969;box-shadow:inset -1px -1px 0 #a0a0a0"></div>
<div class="t" style="left:1455.40px;top:319.39px;font:normal 11px 'Liberation Sans', sans-serif;line-height:11px;color:#000;transform:scaleX(0.9444);transform-origin:0 0;">Reset Timings</div>
<div style="left:1456px;top:330px;width:7px;height:1px;background:#000"></div>
<div style="left:1606px;top:119px;width:23px;height:51px;background:#f0f0f0;border-top:1px solid #fff;border-right:1px solid #696969;border-bottom:1px solid #696969;box-shadow:inset -1px 0 0 #a0a0a0"></div>
<div style="left:1606px;top:171px;width:21px;height:57px;background:#f0f0f0;border-top:1px solid #fff;border-right:1px solid #696969;border-bottom:1px solid #696969;border-left:1px solid #696969;box-shadow:inset -1px 0 0 #a0a0a0"></div>
<div style="left:1606px;top:229px;width:21px;height:101px;background:#f0f0f0;border-top:1px solid #fff;border-right:1px solid #696969;border-bottom:1px solid #696969;border-left:1px solid #696969;box-shadow:inset -1px 0 0 #a0a0a0"></div>
<div class="t" style="left:1614px;top:116.69px;font:11px 'Liberation Sans', sans-serif;line-height:11px;color:#000;transform-origin:0 9.31px;transform:rotate(90deg) scaleX(0.9276)">General</div>
<div class="t" style="left:1612.5px;top:166.69px;font:11px 'Liberation Sans', sans-serif;line-height:11px;color:#000;transform-origin:0 9.31px;transform:rotate(90deg) scaleX(1.0222)">Task Info</div>
<div class="t" style="left:1611.8px;top:224.99px;font:11px 'Liberation Sans', sans-serif;line-height:11px;color:#000;transform-origin:0 9.31px;transform:rotate(90deg) scaleX(0.9352)">CPU&#x27;s Oscilloscope</div>
<svg style="left:3px;top:48px" width="16" height="16" viewBox="0 0 16 16"><defs><linearGradient id="i0gn" x1="0" y1="0" x2="1" y2="1"><stop offset="0" stop-color="#fff"/><stop offset="1" stop-color="#94cdee"/></linearGradient></defs><path d="M2.5 0.5H9.5L13.5 4.5V15.5H2.5Z" fill="url(#i0gn)" stroke="#7878b8"/><path d="M9.5 0.5V4.5H13.5Z" fill="#58a8ec" stroke="#7878b8"/></svg>
<svg style="left:26px;top:48px" width="16" height="16" viewBox="0 0 16 16"><path d="M1.5 3.5H6L7 4.5H11.5V14.5H1.5Z" fill="#f2d468" stroke="#d2a624"/><path d="M1.5 14.5L4.2 7.5H14.5L11.8 14.5Z" fill="#fbe98c" stroke="#d2a624"/><path d="M7.5 1.2H12L13.2 4H15L12.3 7.5L9.5 4H11L10.2 2.6H7.5Z" fill="#18a018"/></svg>
<svg style="left:49px;top:48px" width="16" height="16" viewBox="0 0 16 16"><path d="M1 1.5Q1 0.5 2 0.5H14Q15 0.5 15 1.5V15.5H1Z" fill="#5050c4" stroke="#3c3ca8"/><rect x="3" y="1" width="10" height="6" fill="#f0f0f0"/><rect x="4" y="2.5" width="8" height="2" fill="#d8d8d8"/><rect x="4" y="10" width="8" height="6" fill="#e8e8e8"/><rect x="5" y="11" width="2" height="4" fill="#3434a8"/></svg>
<svg style="left:72px;top:48px" width="16" height="16" viewBox="0 0 16 16"><path d="M4.5 0.5H9.5V6H4.5Z" fill="#96b4f4" stroke="#7090d8"/><path d="M0.5 9L3.5 5.5H12.5L15.5 9V12.5H0.5Z" fill="#d4d4d4" stroke="#8a8a8a"/><rect x="0.5" y="9" width="15" height="1" fill="#f4f4f4"/><rect x="4" y="12" width="10" height="3" fill="#404040"/><rect x="7" y="7" width="2" height="1" fill="#40c040"/></svg>
<svg style="left:103px;top:48px" width="16" height="16" viewBox="0 0 16 16"><path d="M0.5 0.5H6L8.5 3V11.5H0.5Z" fill="#f6f6f6" stroke="#a4a4a4"/><path d="M5.5 4.5H11L13.5 7V15.5H5.5Z" fill="#f6f6f6" stroke="#a4a4a4"/><rect x="7" y="9" width="5" height="5" fill="#d4d4d4"/></svg>
<svg style="left:126px;top:48px" width="16" height="16" viewBox="0 0 16 16"><rect x="0.5" y="1.5" width="13" height="14" rx="2.5" fill="#e6e6e6" stroke="#a4a4a4"/><rect x="3.5" y="0.5" width="7" height="3" rx="1" fill="#d0d0d0" stroke="#a4a4a4"/><rect x="6.5" y="7.5" width="7" height="8" fill="#f2f2f2" stroke="#b4b4b4"/><rect x="8" y="10" width="4" height="4" fill="#d8d8d8"/></svg>
<svg style="left:149px;top:48px" width="16" height="16" viewBox="0 0 16 16"><defs><radialGradient id="i6gf" cx="0.4" cy="0.4" r="0.7"><stop offset="0" stop-color="#fff"/><stop offset="1" stop-color="#9ed4f4"/></radialGradient></defs><path d="M1.5 14.5L6.5 9.5" stroke="#e8901c" stroke-width="2.6" stroke-linecap="round"/><circle cx="10.2" cy="5.8" r="5" fill="url(#i6gf)" stroke="#8a9ad8" stroke-width="1.2"/></svg>
<svg style="left:172px;top:48px" width="16" height="16" viewBox="0 0 16 16"><circle cx="2.6" cy="5.6" r="2.1" fill="#e8f4ff" stroke="#000" stroke-width="0.9"/><circle cx="9.6" cy="5.6" r="2.1" fill="#e8f4ff" stroke="#000" stroke-width="0.9"/><path d="M4.7 5.2Q6.1 3.8 7.5 5.2M1.2 4.2Q2 1.4 3.6 2.4M11.5 4.6Q13.4 1.6 15 2.2L15.4 3.4" stroke="#000" fill="none" stroke-width="0.9"/><path d="M1 10.2H11V8.6L15.6 11.9L11 15.2V13.6H1Z" fill="#00780a"/></svg>
<svg style="left:195px;top:48px" width="16" height="16" viewBox="0 0 16 16"><text x="0.8" y="11.6" font-family="Liberation Sans" font-size="10" fill="#0000ff" stroke="#0000ff" stroke-width="0.35">a</text><rect x="6.6" y="7.2" width="2" height="2" fill="#0000ff"/><text x="8.6" y="11.6" font-family="Liberation Sans" font-size="10" fill="#0000ff" stroke="#0000ff" stroke-width="0.35">b</text></svg>
<svg style="left:226px;top:48px" width="16" height="16" viewBox="0 0 16 16"><defs><linearGradient id="i9gm" x1="0" y1="0" x2="1" y2="1"><stop offset="0" stop-color="#fff"/><stop offset="1" stop-color="#cfe0f2"/></linearGradient></defs><rect x="0.5" y="0.5" width="15" height="12" rx="1.5" fill="#9cc6f0" stroke="#6c6cb4"/><rect x="2.5" y="2.5" width="11" height="8" fill="url(#i9gm)" stroke="#5a6a9a" stroke-width="0.6"/><rect x="2" y="12.5" width="12" height="1.2" fill="#303058"/><rect x="3" y="14" width="11" height="1.6" fill="#8a8ac4"/></svg>
<svg style="left:249px;top:48px" width="16" height="16" viewBox="0 0 16 16"><rect x="0.5" y="0.5" width="5" height="6" fill="#f4f4f4" stroke="#707070"/><rect x="2.5" y="2.5" width="5" height="7" fill="#fff" stroke="#5a5a8a"/><rect x="4" y="4.5" width="2" height="1" fill="#6aa8e8"/><rect x="4" y="6.5" width="2" height="1" fill="#6aa8e8"/><path d="M2.5 10V12H7" stroke="#ff0000" stroke-width="1.4" fill="none"/><path d="M6.5 10L9.5 12L6.5 14Z" fill="#ff0000"/><rect x="10.5" y="1.5" width="4.5" height="14" fill="#e8eef8" stroke="#5c5c96"/><path d="M12 4H14M12 6H14M12 8H14M12 10H14M12 12H14" stroke="#6aa8e8"/></svg>
<svg style="left:272px;top:48px" width="16" height="16" viewBox="0 0 16 16"><path d="M0.5 3.5H1.5M2.5 3.5H3.5M4.5 3.5H6M0.5 5.5H1.5M2.5 5.5H3.5M4.5 5.5H6M0.5 7.5H1.5M2.5 7.5H3.5M4.5 7.5H6M0.5 9.5H1.5M2.5 9.5H3.5M4.5 9.5H6M0.5 11.5H1.5M2.5 11.5H3.5M4.5 11.5H6" stroke="#101010"/><rect x="7.5" y="1.5" width="5" height="14" fill="#e8eef8" stroke="#5c5c96"/><path d="M9 4H11M9 6H11M9 8H11M9 10H11M9 12H11" stroke="#6aa8e8"/><path d="M13.5 6L15.5 7.5L13.5 9Z" fill="#ff0000"/></svg>
<svg style="left:303px;top:48px" width="16" height="16" viewBox="0 0 16 16"><defs><radialGradient id="i12gd" cx="0.4" cy="0.35" r="0.7"><stop offset="0" stop-color="#dcdcdc"/><stop offset="1" stop-color="#a4a4a4"/></radialGradient></defs><circle cx="8" cy="8" r="7.4" fill="url(#i12gd)" stroke="#a8a8a8" stroke-width="0.8"/><path d="M6.3 3.8L11.8 8L6.3 12.2Z" fill="#f4f4f4"/></svg>
<svg style="left:326px;top:48px" width="16" height="16" viewBox="0 0 16 16"><defs><radialGradient id="i13gd" cx="0.4" cy="0.35" r="0.7"><stop offset="0" stop-color="#dcdcdc"/><stop offset="1" stop-color="#a4a4a4"/></radialGradient></defs><circle cx="8" cy="8" r="7.4" fill="url(#i13gd)" stroke="#a8a8a8" stroke-width="0.8"/><rect x="4.6" y="4.5" width="2.2" height="7" fill="#f4f4f4"/><rect x="9.2" y="4.5" width="2.2" height="7" fill="#f4f4f4"/></svg>
<svg style="left:349px;top:48px" width="16" height="16" viewBox="0 0 16 16"><defs><radialGradient id="i14gd" cx="0.4" cy="0.35" r="0.7"><stop offset="0" stop-color="#dcdcdc"/><stop offset="1" stop-color="#a4a4a4"/></radialGradient></defs><circle cx="8" cy="8" r="7.4" fill="url(#i14gd)" stroke="#a8a8a8" stroke-width="0.8"/><rect x="5.6" y="5.6" width="4.8" height="4.8" fill="#f4f4f4"/></svg>
<svg style="left:372px;top:48px" width="16" height="16" viewBox="0 0 16 16"><rect x="3.80" y="4.50" width="4.2" height="2.8" rx="1.40" transform="rotate(-45 5.9 5.9)" fill="#d8d8d8" stroke="#888" stroke-width="1"/><rect x="7.10" y="7.90" width="5.8" height="4.2" rx="2.10" transform="rotate(-45 10 10)" fill="#d8d8d8" stroke="#888" stroke-width="1"/></svg>
<svg style="left:395px;top:48px" width="16" height="16" viewBox="0 0 16 16"><rect x="3.80" y="0.50" width="4.2" height="2.8" rx="1.40" transform="rotate(-45 5.9 1.9)" fill="#d8d8d8" stroke="#888" stroke-width="1"/><rect x="7.10" y="3.60" width="5.8" height="4.2" rx="2.10" transform="rotate(-45 10 5.7)" fill="#d8d8d8" stroke="#888" stroke-width="1"/><rect x="2.90" y="7.60" width="4.2" height="2.8" rx="1.40" transform="rotate(-45 5 9)" fill="#d8d8d8" stroke="#888" stroke-width="1"/><rect x="6.10" y="10.80" width="5.8" height="4.2" rx="2.10" transform="rotate(-45 9 12.9)" fill="#d8d8d8" stroke="#888" stroke-width="1"/></svg>
<svg style="left:418px;top:48px" width="16" height="16" viewBox="0 0 16 16"><path d="M5 14.5L1.3 10.2Q0.9 9 2.2 9.1L5 10.8V4.2Q5 3.2 6 3.2Q7 3.2 7 4.2V2.5Q7 1.5 8 1.5Q9 1.5 9 2.5V3Q9 2.1 10 2.1Q11 2.1 11 3V4.6Q11 3.7 12 3.7Q13 3.7 13 4.6V11Q13 13.3 12 14.5Z" fill="#f6f6f6" stroke="#a0a0a0"/><path d="M7 4V8.5M9 3V8.5M11 4.5V8.5" stroke="#a0a0a0"/></svg>
<svg style="left:449px;top:48px" width="16" height="16" viewBox="0 0 16 16"><defs><radialGradient id="i18gp" cx="0.45" cy="0.3" r="0.7"><stop offset="0" stop-color="#e8e8ff"/><stop offset="1" stop-color="#7070c8"/></radialGradient></defs><rect x="8.5" y="0.5" width="1.6" height="3.5" fill="#404040"/><path d="M1 9Q1 3 8 3Q15 3 15 9Q15 11 13 11H3Q1 11 1 9Z" fill="url(#i18gp)" stroke="#6a6ab8" stroke-width="0.6"/><path d="M3.5 10L2 15M9 10L8 15" stroke="#d4a420" stroke-width="1.6"/></svg>
<svg style="left:480px;top:48px" width="16" height="16" viewBox="0 0 16 16"><rect x="0.5" y="0.5" width="11" height="15" fill="#f4f8fc" stroke="#8a9ac0"/><path d="M2 3H3M2 5.5H3M2 8H3M2 10.5H3M2 13H3" stroke="#303060"/><path d="M4 3H10M4 13H10" stroke="#4a6aaa" stroke-width="1.2"/><rect x="4.5" y="5.5" width="11" height="6" fill="#fff" stroke="#2a5aa8" stroke-width="1.2"/><path d="M6 7.5H7M8 7.5H14M6 9.5H7M8 9.5H14" stroke="#2a5aa8"/></svg>
<svg style="left:503px;top:48px" width="16" height="16" viewBox="0 0 16 16"><circle cx="8" cy="8" r="7.3" fill="#d8e4ea" stroke="#8a7a5a" stroke-width="1.1"/><circle cx="9" cy="4.2" r="2.6" fill="#10a8f0" stroke="#0a78c0" stroke-width="0.5"/><circle cx="4.5" cy="9.8" r="2.4" fill="#e8c820" stroke="#a08810" stroke-width="0.5"/><circle cx="10.5" cy="10.5" r="2.6" fill="#18c818" stroke="#0a8a0a" stroke-width="0.5"/></svg>
<svg style="left:526px;top:48px" width="16" height="16" viewBox="0 0 16 16"><rect x="0.5" y="2.5" width="13" height="12.5" fill="#f4faff" stroke="#c0a060"/><rect x="1" y="3" width="12" height="2" fill="#3a78c8"/><rect x="1" y="5" width="12" height="1" fill="#a8c8ec"/><text x="1.5" y="13" font-family="Liberation Sans" font-weight="bold" font-size="8" fill="#ff2020">W</text><path d="M12 0.5V8M8.5 4H15.5" stroke="#a88420" stroke-width="1.4"/><circle cx="12" cy="4" r="1.6" fill="#f8f0c0"/></svg>
<svg style="left:549px;top:48px" width="16" height="16" viewBox="0 0 16 16"><rect x="0.5" y="2.5" width="13" height="12.5" fill="#f4faff" stroke="#c0a060"/><rect x="1" y="3" width="12" height="2" fill="#3a78c8"/><rect x="1" y="5" width="12" height="1" fill="#a8c8ec"/><text x="1.2" y="13" font-family="Liberation Sans" font-weight="bold" font-size="7.5" fill="#ff2020">DR</text><path d="M12 0.5V8M8.5 4H15.5" stroke="#a88420" stroke-width="1.4"/><circle cx="12" cy="4" r="1.6" fill="#f8f0c0"/></svg>
<div style="left:95px;top:47px;width:1px;height:19px;background:#a0a0a0"></div>
<div style="left:96px;top:47px;width:1px;height:19px;background:#fff"></div>
<div style="left:218px;top:47px;width:1px;height:19px;background:#a0a0a0"></div>
<div style="left:219px;top:47px;width:1px;height:19px;background:#fff"></div>
<div style="left:295px;top:47px;width:1px;height:19px;background:#a0a0a0"></div>
<div style="left:296px;top:47px;width:1px;height:19px;background:#fff"></div>
<div style="left:441px;top:47px;width:1px;height:19px;background:#a0a0a0"></div>
<div style="left:442px;top:47px;width:1px;height:19px;background:#fff"></div>
<div style="left:472px;top:47px;width:1px;height:19px;background:#a0a0a0"></div>
<div style="left:473px;top:47px;width:1px;height:19px;background:#fff"></div>
<div style="left:572px;top:47px;width:1px;height:19px;background:#a0a0a0"></div>
<div style="left:573px;top:47px;width:1px;height:19px;background:#fff"></div>
<svg style="left:6px;top:74px" width="17" height="17" viewBox="0 0 17 17"><path d="M10.6 7.2L12.2 6.6L12.8 8L14.4 7.9L14.8 9.4L16.2 10.1L15.6 11.5L16.3 12.8L15 13.8L15 15.3L13.4 15.3L12.6 16.5L11.2 15.7L9.8 16.1L9.2 14.6L7.7 14.2L8 12.7L7 11.6L8.1 10.5L8 9L9.5 8.6Z" fill="#f0b030" stroke="#b86810" stroke-width="0.8"/><circle cx="11.7" cy="11.7" r="1.5" fill="#fff0c8"/><path d="M5.6 0.6L7.2 0.2L7.9 1.5L9.6 1.4L10 2.9L11.5 3.6L11.1 5.1L11.9 6.4L10.7 7.5L10.7 9L9.1 9.1L8.2 10.2L6.9 9.4L5.4 9.8L4.8 8.4L3.2 8L3.4 6.5L2.3 5.4L3.4 4.2L3.3 2.7L4.8 2.3Z" fill="#30c830" stroke="#109010" stroke-width="0.8"/><path d="M7.8 0.6V7.5M10.8 7.8V13.5" stroke="#7080a0" stroke-width="1.4"/></svg>
<svg style="left:8px;top:91px" width="14" height="15" viewBox="0 0 14 15"><defs><linearGradient id="dg91" x1="0" y1="0" x2="1" y2="1"><stop offset="0" stop-color="#fff"/><stop offset="1" stop-color="#a8d8f4"/></linearGradient></defs><path d="M0.5 0.5H9L12.5 4V13.5H0.5Z" fill="url(#dg91)" stroke="#7c7cc0"/><path d="M9 0.5V4H12.5Z" fill="#5aa4e8" stroke="#7c7cc0" stroke-width="0.6"/><path d="M2.5 2.5H6.5" stroke="#a8a8a8"/><rect x="2" y="5.3" width="8" height="3" fill="#7ef07e"/><path d="M2 5.2H9.5M2 8.5H10.5M2 11.5H10.5" stroke="#707070"/></svg>
<svg style="left:8px;top:107px" width="14" height="15" viewBox="0 0 14 15"><defs><linearGradient id="dg107" x1="0" y1="0" x2="1" y2="1"><stop offset="0" stop-color="#fff"/><stop offset="1" stop-color="#a8d8f4"/></linearGradient></defs><path d="M0.5 0.5H9L12.5 4V13.5H0.5Z" fill="url(#dg107)" stroke="#7c7cc0"/><path d="M9 0.5V4H12.5Z" fill="#5aa4e8" stroke="#7c7cc0" stroke-width="0.6"/><path d="M2.5 2.5H6.5" stroke="#a8a8a8"/><rect x="2" y="5.3" width="8" height="3" fill="#7ef07e"/><path d="M2 5.2H9.5M2 8.5H10.5M2 11.5H10.5" stroke="#707070"/></svg>
<svg style="left:8px;top:123px" width="14" height="15" viewBox="0 0 14 15"><defs><linearGradient id="dg123" x1="0" y1="0" x2="1" y2="1"><stop offset="0" stop-color="#fff"/><stop offset="1" stop-color="#a8d8f4"/></linearGradient></defs><path d="M0.5 0.5H9L12.5 4V13.5H0.5Z" fill="url(#dg123)" stroke="#7c7cc0"/><path d="M9 0.5V4H12.5Z" fill="#5aa4e8" stroke="#7c7cc0" stroke-width="0.6"/><path d="M2.5 2.5H6.5" stroke="#a8a8a8"/><rect x="2" y="5.3" width="8" height="3" fill="#7ef07e"/><path d="M2 5.2H9.5M2 8.5H10.5M2 11.5H10.5" stroke="#707070"/></svg>
<svg style="left:8px;top:139px" width="14" height="15" viewBox="0 0 14 15"><defs><linearGradient id="dg139" x1="0" y1="0" x2="1" y2="1"><stop offset="0" stop-color="#fff"/><stop offset="1" stop-color="#a8d8f4"/></linearGradient></defs><path d="M0.5 0.5H9L12.5 4V13.5H0.5Z" fill="url(#dg139)" stroke="#7c7cc0"/><path d="M9 0.5V4H12.5Z" fill="#5aa4e8" stroke="#7c7cc0" stroke-width="0.6"/><path d="M2.5 2.5H6.5" stroke="#a8a8a8"/><rect x="2" y="5.3" width="8" height="3" fill="#7ef07e"/><path d="M2 5.2H9.5M2 8.5H10.5M2 11.5H10.5" stroke="#707070"/></svg>
<svg style="left:8px;top:155px" width="14" height="15" viewBox="0 0 14 15"><defs><linearGradient id="dg155" x1="0" y1="0" x2="1" y2="1"><stop offset="0" stop-color="#fff"/><stop offset="1" stop-color="#a8d8f4"/></linearGradient></defs><path d="M0.5 0.5H9L12.5 4V13.5H0.5Z" fill="url(#dg155)" stroke="#7c7cc0"/><path d="M9 0.5V4H12.5Z" fill="#5aa4e8" stroke="#7c7cc0" stroke-width="0.6"/><path d="M2.5 2.5H6.5" stroke="#a8a8a8"/><rect x="2" y="5.3" width="8" height="3" fill="#7ef07e"/><path d="M2 5.2H9.5M2 8.5H10.5M2 11.5H10.5" stroke="#707070"/></svg>
<svg style="left:9px;top:1001px" width="14" height="13" viewBox="0 0 14 13"><rect x="0.5" y="0.5" width="13" height="12" fill="#fff" stroke="#5a6a8c"/><rect x="1" y="1" width="12" height="1.6" fill="#7484a4"/><path d="M1 4.5H13M1 6.5H13M1 8.5H13M1 10.5H13" stroke="#b8c0d4"/><path d="M4.5 3V12" stroke="#b8c0d4"/><rect x="2" y="4.6" width="1.6" height="1.6" fill="#f07070"/><rect x="2" y="6.6" width="1.6" height="1.6" fill="#50a0f0"/><rect x="2" y="8.6" width="1.6" height="1.6" fill="#f07070"/></svg>
</body></html>
